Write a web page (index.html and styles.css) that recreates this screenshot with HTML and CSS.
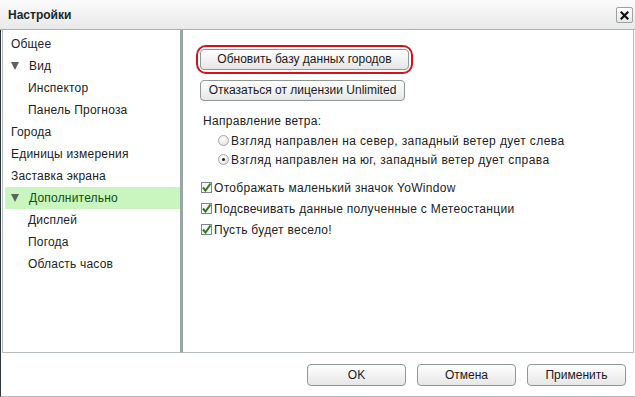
FILE: index.html
```html
<!DOCTYPE html>
<html lang="ru">
<head>
<meta charset="utf-8">
<title>Настройки</title>
<link rel="stylesheet" href="styles.css">
</head>
<body>
<div class="window">
  <div class="titlebar">
    <span class="title">Настройки</span>
    <span class="close"><svg width="9" height="9" viewBox="0 0 9 9"><path d="M1.5 1.5 L7.5 7.5 M7.5 1.5 L1.5 7.5" stroke="#111" stroke-width="2.2" stroke-linecap="square"/></svg></span>
  </div>
  <div class="main">
    <div class="panes">
      <div class="tree">
        <div class="item">Общее</div>
        <div class="item"><span class="tri"></span>Вид</div>
        <div class="item child">Инспектор</div>
        <div class="item child">Панель Прогноза</div>
        <div class="item">Города</div>
        <div class="item">Единицы измерения</div>
        <div class="item">Заставка экрана</div>
        <div class="item selected"><span class="tri"></span>Дополнительно</div>
        <div class="item child">Дисплей</div>
        <div class="item child">Погода</div>
        <div class="item child">Область часов</div>
      </div>
      <div class="content">
        <div class="ring"><div class="btn btn-update">Обновить базу данных городов</div></div>
        <div class="btn btn-license">Отказаться от лицензии Unlimited</div>
        <div class="label">Направление ветра:</div>
        <div class="radio-row first"><span class="radio"></span>Взгляд направлен на север, западный ветер дует слева</div>
        <div class="radio-row"><span class="radio on"></span>Взгляд направлен на юг, западный ветер дует справа</div>
        <div class="check-row first"><span class="check"><svg width="11" height="11" viewBox="0 0 11 11"><path d="M2 5.5 L4.5 8.5 L9.5 1.5" fill="none" stroke="#2f7a22" stroke-width="2"/></svg></span>Отображать маленький значок YoWindow</div>
        <div class="check-row"><span class="check"><svg width="11" height="11" viewBox="0 0 11 11"><path d="M2 5.5 L4.5 8.5 L9.5 1.5" fill="none" stroke="#2f7a22" stroke-width="2"/></svg></span>Подсвечивать данные полученные с Метеостанции</div>
        <div class="check-row"><span class="check"><svg width="11" height="11" viewBox="0 0 11 11"><path d="M2 5.5 L4.5 8.5 L9.5 1.5" fill="none" stroke="#2f7a22" stroke-width="2"/></svg></span>Пусть будет весело!</div>
      </div>
    </div>
    <div class="footer">
      <div class="btn fbtn">OK</div>
      <div class="btn fbtn">Отмена</div>
      <div class="btn fbtn">Применить</div>
    </div>
  </div>
</div>
</body>
</html>
```
FILE: styles.css
```css
* { box-sizing: border-box; }
html, body { margin: 0; padding: 0; background: #fff; }
body {
  width: 635px; height: 397px; overflow: hidden;
  font-family: "Liberation Sans", Arial, sans-serif;
  font-size: 12px; color: #222;
}
.window { width: 635px; height: 397px; display: flex; flex-direction: column; }
.titlebar {
  height: 30px; flex: none;
  background: linear-gradient(#fbfbfb, #e9e9e9);
  border-bottom: 1px solid #a8b0b0;
  display: flex; align-items: center; justify-content: space-between;
  padding: 0 2px 0 8px;
}
.title { font-weight: bold; color: #15282e; font-size: 12px; padding-top: 1px; }
.close {
  width: 17px; height: 16px; margin-top: 1px;
  border: 1px solid #98a2a2; border-radius: 2px;
  background: linear-gradient(#ffffff, #e8e8e8);
  display: flex; align-items: center; justify-content: center;
}
.main {
  flex: 1; display: flex; flex-direction: column;
  border-left: 1px solid #2c3640;
  border-bottom: 1px solid #b0b8b8;
}
.panes { height: 323px; display: flex; margin-left: 1px; margin-right: 1px; }
.tree {
  width: 181px; flex: none;
  border-left: 1px solid #b6bcbc; border-bottom: 1px solid #b6bcbc;
  border-right: 3px solid #9ba5a3;
  padding: 3px 0 0 2px;
  letter-spacing: 0.2px;
}
.item { height: 22px; line-height: 22px; padding-left: 6px; display: flex; align-items: center; white-space: nowrap; }
.item.child { padding-left: 23px; }
.item.selected { background: #c9f5bf; color: #0f4d12; }
.tri {
  width: 0; height: 0; margin-right: 10px;
  border-left: 4px solid transparent; border-right: 4px solid transparent;
  border-top: 8px solid #5f6262;
}
.content {
  flex: 1;
  border-right: 1px solid #b6bcbc; border-bottom: 1px solid #b6bcbc;
  padding: 15px 0 0 13px;
  display: flex; flex-direction: column; align-items: flex-start;
}
.ring { border: 2px solid #d4121c; border-radius: 10px; padding: 2px; }
.btn {
  height: 21px; line-height: 19px; text-align: center;
  border: 1px solid #8e9898; border-radius: 4px;
  background: linear-gradient(#ffffff, #e6e6e6);
  color: #1a1a1a; white-space: nowrap;
}
.btn-update { width: 209px; }
.btn-license { width: 205px; margin: 6px 0 0 4px; }
.label { margin: 13px 0 0 7px; line-height: 15px; letter-spacing: 0.3px; }
.radio-row { height: 19px; margin-left: 22px; display: flex; align-items: center; letter-spacing: 0.4px; }
.radio-row.first { margin-top: 2px; }
.radio {
  width: 11px; height: 11px; border-radius: 50%; margin-right: 2px;
  border: 1px solid #a3a8a8;
  background: radial-gradient(circle at 40% 35%, #ffffff, #dcdcdc);
  display: flex; align-items: center; justify-content: center;
}
.radio.on::after { content: ""; width: 3px; height: 3px; border-radius: 50%; background: #222; }
.check-row { height: 21px; margin-left: 5px; display: flex; align-items: center; letter-spacing: 0.3px; }
.check-row.first { margin-top: 8px; }
.check {
  width: 11px; height: 11px; margin-right: 2px;
  border: 1px solid #7e8686; background: #f6f6f6;
  display: flex; align-items: center; justify-content: center;
}
.check svg { flex: none; }
.footer {
  flex: 1; display: flex; justify-content: flex-end; align-items: center;
  gap: 11px; padding-right: 9px;
}
.fbtn { width: 99px; height: 22px; line-height: 20px; }
```
